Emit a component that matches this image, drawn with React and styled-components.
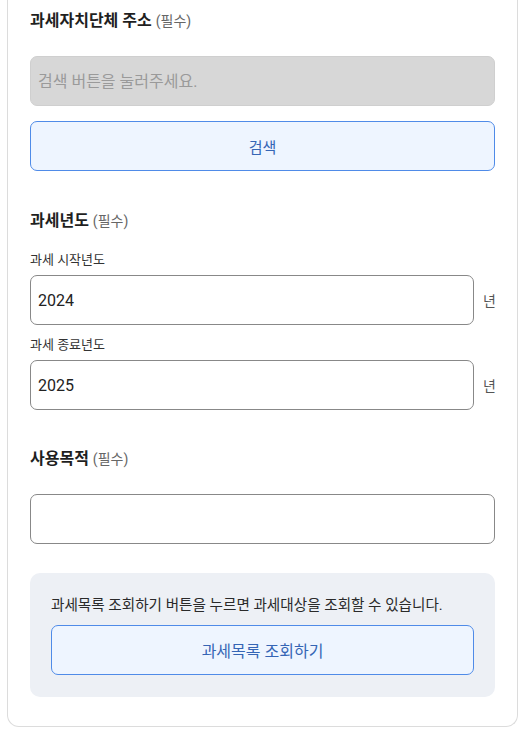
import React from "react";
import styled, { createGlobalStyle } from "styled-components";

const GlobalStyle = createGlobalStyle`
  html, body {
    margin: 0;
    padding: 0;
    background: #ffffff;
  }
  body {
    font-family: Roboto, "Noto Sans CJK KR", sans-serif;
    color: #222;
  }
`;

const Page = styled.div`
  padding: 0 5px 0 7px;
  width: 523px;
  box-sizing: border-box;
`;

const Card = styled.div`
  border: 1px solid #dcdcdc;
  border-top: 0;
  border-radius: 0 0 12px 12px;
  padding: 9px 22px 29px 22px;
  display: flex;
  flex-direction: column;
`;

const Section = styled.section`
  display: flex;
  flex-direction: column;
  margin-top: ${(p) => p.$top || 0}px;
`;

const Title = styled.h3`
  margin: 0;
  font-size: 16px;
  font-weight: 700;
  line-height: 24px;
  color: #1f1f1f;
  span {
    font-size: 14px;
    font-weight: 400;
    color: #666;
  }
`;

const SubLabel = styled.div`
  font-size: 13px;
  line-height: 18px;
  color: #333;
  margin: ${(p) => p.$top || 0}px 0 6px;
`;

const Field = styled.input`
  box-sizing: border-box;
  width: 100%;
  height: 50px;
  margin-top: ${(p) => p.$top || 0}px;
  border: 1px solid ${(p) => (p.disabled ? "#cfcfcf" : "#888")};
  background: ${(p) => (p.disabled ? "#d7d7d7" : "#fff")};
  border-radius: 7px;
  padding: 0 7px;
  font-family: inherit;
  font-size: 16px;
  color: #222;
  outline: none;
  &::placeholder {
    color: #9a9a9a;
  }
`;

const Button = styled.button`
  box-sizing: border-box;
  width: 100%;
  height: 50px;
  border: 1px solid #4f8be8;
  background: #eef5ff;
  border-radius: 7px;
  font-family: inherit;
  font-size: ${(p) => p.$size || 15}px;
  color: #3565b5;
  margin-top: ${(p) => p.$top || 0}px;
  cursor: pointer;
`;

const YearRow = styled.div`
  display: flex;
  align-items: center;
  gap: 9px;
`;

const Unit = styled.span`
  font-size: 14px;
  color: #555;
  width: 12px;
`;

const InfoBox = styled.div`
  margin-top: 29px;
  background: #edf0f5;
  border-radius: 10px;
  padding: 22px 21px 22px;
  display: flex;
  flex-direction: column;
  gap: 10px;
`;

const InfoText = styled.p`
  margin: 0;
  font-size: 14.6px;
  line-height: 20px;
  color: #2a2a2a;
  white-space: nowrap;
`;

export default function App() {
  return (
    <>
      <GlobalStyle />
      <Page>
        <Card>
          <Section>
            <Title>
              과세자치단체 주소 <span>(필수)</span>
            </Title>
            <Field disabled $top={23} placeholder="검색 버튼을 눌러주세요." />
            <Button $top={15}>검색</Button>
          </Section>

          <Section $top={38}>
            <Title>
              과세년도 <span>(필수)</span>
            </Title>
            <SubLabel $top={18}>과세 시작년도</SubLabel>
            <YearRow>
              <Field defaultValue="2024" />
              <Unit>년</Unit>
            </YearRow>
            <SubLabel $top={11}>과세 종료년도</SubLabel>
            <YearRow>
              <Field defaultValue="2025" />
              <Unit>년</Unit>
            </YearRow>
          </Section>

          <Section $top={37}>
            <Title>
              사용목적 <span>(필수)</span>
            </Title>
            <Field $top={23} />
          </Section>

          <InfoBox>
            <InfoText>
              과세목록 조회하기 버튼을 누르면 과세대상을 조회할 수 있습니다.
            </InfoText>
            <Button $size={16}>과세목록 조회하기</Button>
          </InfoBox>
        </Card>
      </Page>
    </>
  );
}
